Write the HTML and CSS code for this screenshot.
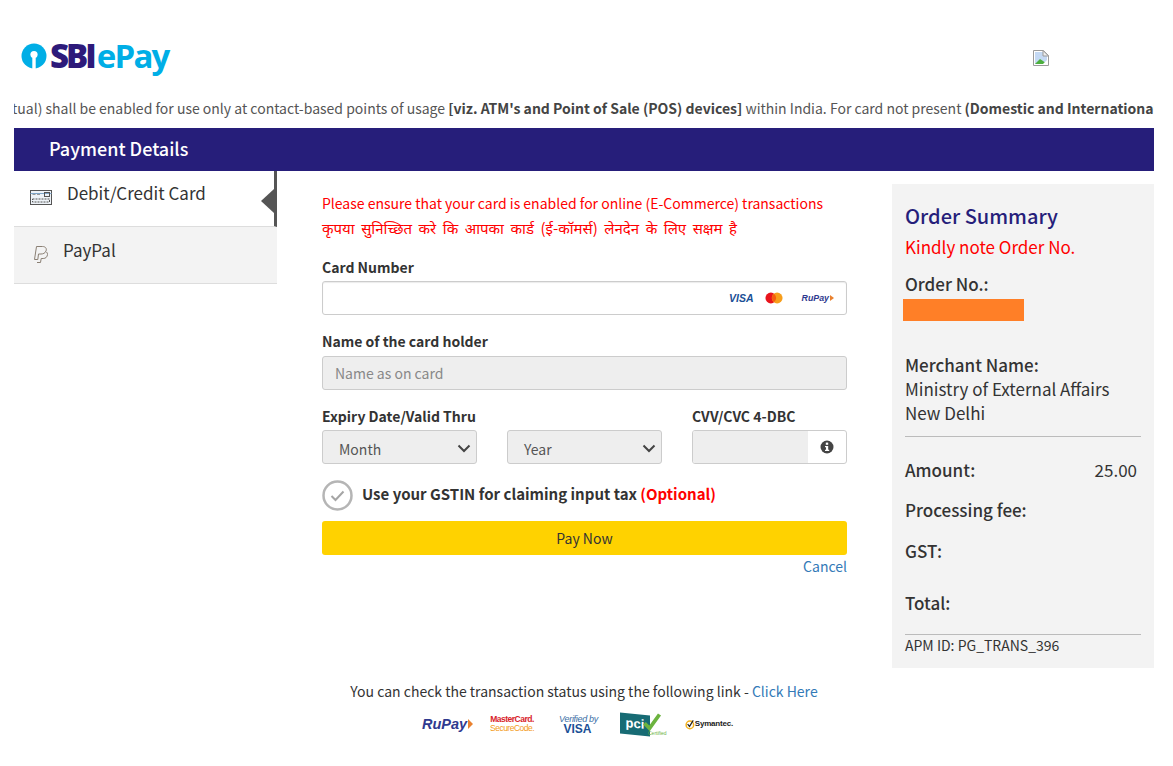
FILE: index.html
```html
<!DOCTYPE html>
<html lang="en">
<head>
<meta charset="utf-8">
<title>SBIePay</title>
<link rel="stylesheet" href="styles.css">
</head>
<body>
<header class="top">
  <div class="logo">
    <svg class="logo-mark" width="26" height="30" viewBox="0 0 26 30"><circle cx="13" cy="14" r="12.500" fill="#00aee6"/><circle cx="13" cy="12.500" r="3.600" fill="#fff"/><rect x="11.300" y="13" width="3.400" height="14" fill="#fff"/></svg>
    <span class="logo-sbi">SBI</span><span class="logo-epay">ePay</span>
  </div>
  <svg class="broken" width="16" height="16" viewBox="0 0 16 16"><path d="M.5.5h10l5 5v10H.5z" fill="#fff" stroke="#9a9a9a"/><path d="M2 2h8v4h4v8H2z" fill="#c4d9f4"/><path d="M2 14l5-5 3 2 4 3z" fill="#4caf3e"/><path d="M10 .5l5.500 5.500h-5.500z" fill="#eee" stroke="#9a9a9a"/><path d="M9 15l6-6v6z" fill="#fff"/></svg>
</header>
<div class="notice"><p>tual) shall be enabled for use only at contact-based points of usage <b>[viz. ATM's and Point of Sale (POS) devices]</b> within India. For card not present <b>(Domestic and International) transactions</b></p></div>
<div class="title-bar">Payment Details</div>
<main class="content">
  <nav class="tabs">
    <div class="tab tab-active">
      <svg class="tab-icon" width="24" height="18" viewBox="0 0 24 18" fill="none" stroke="#555"><rect x="1.500" y="2.500" width="21" height="14" fill="#eef3f8"/><path d="M1.500 5.500h21" stroke="#7fa6c9"/><rect x="15.500" y="4.500" width="5" height="4"/><path d="M3.500 6.500h3M8 6.500h3" stroke="#999"/><rect x="3.500" y="11" width="17" height="3" stroke-dasharray="2 1"/></svg>
      <span>Debit/Credit Card</span>
      <i class="tab-arrow"></i>
    </div>
    <div class="tab tab-paypal">
      <svg class="tab-icon-pp" width="18" height="20" viewBox="0 0 18 20" fill="none" stroke="#8a7f73" stroke-width="1"><path d="M2.500 15.500L4.500 2.500h6c3 0 4.500 2 3.500 4.500-.8 2.200-3 3-5 3H6.500l-.7 5.500z"/><path d="M5 18.500h3.500l.7-4h2c2.500 0 4-1.500 4.300-4 .1-1-.3-1.800-1-2.500"/></svg>
      <span>PayPal</span>
    </div>
  </nav>
  <form class="form">
    <p class="warn">Please ensure that your card is enabled for online (E-Commerce) transactions</p>
    <p class="warn warn-hi" lang="hi">कृपया सुनिच्छित करे कि आपका कार्ड (ई-कॉमर्स) लेनदेन के लिए सक्षम है</p>
    <label class="lbl lbl-card">Card Number</label>
    <div class="input card-input">
      <span class="visa">VISA</span>
      <svg class="mc" width="18" height="12" viewBox="0 0 20 13"><circle cx="6.500" cy="6.500" r="6" fill="#e8141c"/><circle cx="13.500" cy="6.500" r="6" fill="#f79e1b"/><path d="M10 1.700a6 6 0 0 1 0 9.600a6 6 0 0 1 0-9.600z" fill="#f45c10"/></svg>
      <span class="rupay">RuPay<i class="rupay-tick"></i></span>
    </div>
    <label class="lbl lbl-name">Name of the card holder</label>
    <div class="input input-off placeholder">Name as on card</div>
    <div class="row">
      <div class="col col-exp">
        <label class="lbl">Expiry Date/Valid Thru</label>
        <div class="selects">
          <div class="input input-off sel">Month<svg class="chev" width="14" height="9" viewBox="0 0 14 9" fill="none" stroke="#444" stroke-width="2"><path d="M1.500 1.500L7 7l5.500-5.500"/></svg></div>
          <div class="input input-off sel">Year<svg class="chev" width="14" height="9" viewBox="0 0 14 9" fill="none" stroke="#444" stroke-width="2"><path d="M1.500 1.500L7 7l5.500-5.500"/></svg></div>
        </div>
      </div>
      <div class="col col-cvv">
        <label class="lbl">CVV/CVC 4-DBC</label>
        <div class="input cvv"><span class="cvv-fill"></span><span class="cvv-info"><svg width="14" height="14" viewBox="0 0 14 14"><circle cx="7" cy="7" r="6.500" fill="#444"/><rect x="5.800" y="2.600" width="2.400" height="2.200" fill="#fff"/><path d="M5 6h3.200v3.800H9.200v1.200H5V9.800h1V7.200H5z" fill="#fff"/></svg></span></div>
      </div>
    </div>
    <div class="gst">
      <svg width="31" height="31" viewBox="0 0 31 31" fill="none"><circle cx="15.500" cy="15.500" r="14" stroke="#b5b5b5" stroke-width="2.500"/><path d="M9.500 16l4 4 8-8.500" stroke="#a5a5a5" stroke-width="2"/></svg>
      <span class="gst-text">Use your GSTIN for claiming input tax <b class="opt">(Optional)</b></span>
    </div>
    <button type="button" class="pay">Pay Now</button>
    <a class="cancel">Cancel</a>
  </form>
  <aside class="summary">
    <h2 class="sum-title">Order Summary</h2>
    <p class="sum-note">Kindly note Order No.</p>
    <p class="sum-key sum-order">Order No.:</p>
    <div class="redact"></div>
    <p class="sum-key sum-merchant">Merchant Name:</p>
    <p class="sum-val">Ministry of External Affairs</p>
    <p class="sum-val">New Delhi</p>
    <hr class="rule">
    <div class="line line-amount"><span>Amount:</span><span class="amount">25.00</span></div>
    <div class="line">Processing fee:</div>
    <div class="line line-gst">GST:</div>
    <div class="line line-total">Total:</div>
    <hr class="rule rule-apm">
    <p class="apm">APM ID: PG_TRANS_396</p>
  </aside>
</main>
<footer class="foot">
  <p class="foot-text">You can check the transaction status using the following link - <a class="link">Click Here</a></p>
  <div class="badges">
    <span class="b-rupay">RuPay<i class="b-tick"></i></span>
    <span class="b-mc"><b>MasterCard.</b><b class="b-mc2">SecureCode.</b></span>
    <span class="b-vbv">Verified by<b>VISA</b></span>
    <span class="b-pci"><span class="pci-box">pci</span><svg class="pci-check" width="20" height="20" viewBox="0 0 16 16" fill="none" stroke="#6cb33f" stroke-width="3"><path d="M2 9l4 4 8-11"/></svg><span class="pci-cert">Certified</span></span>
    <span class="b-sym"><svg width="12" height="13" viewBox="0 0 13 13" fill="none"><circle cx="6.500" cy="7" r="5" stroke="#f5b21b" stroke-width="2"/><path d="M3.500 6l2.500 3 5-8" stroke="#222" stroke-width="1.600"/></svg>Symantec.</span>
  </div>
</footer>
</body>
</html>
```
FILE: styles.css
```css
* { box-sizing: border-box; }
html, body { margin: 0; padding: 0; }
body { width: 1173px; height: 766px; overflow: hidden; background: #fff; color: #333; font-family: "Noto Sans CJK SC", "Noto Sans", sans-serif; font-size: 16px; line-height: 24px; padding: 0 19px 0 14px; }
p { margin: 0; }

.top { height: 89px; display: flex; align-items: flex-start; }
.logo { margin: 39px 0 0 7px; display: flex; align-items: center; height: 34px; font-family: "Open Sans", sans-serif; font-size: 33px; font-weight: 800; line-height: 34px; }
.logo-mark { margin-right: 3px; margin-top: 2px; flex: none; }
.logo-sbi { color: #2d1a7a; letter-spacing: -3px; }
.logo-epay { color: #00aee6; margin-left: 3px; font-weight: 700; letter-spacing: -1.800px; }
.broken { margin: 50px 105px 0 auto; }

.notice { height: 39px; overflow: hidden; color: #555; font-size: 14px; line-height: 39px; white-space: nowrap; }
.notice p { margin-left: -2px; }
.notice b { color: #444; }
.title-bar { height: 43px; background: #261e7a; color: #fff; font-size: 18px; font-weight: 500; line-height: 41px; padding-left: 35px; }

.content { display: flex; align-items: flex-start; }
.tabs { width: 263px; flex: none; }
.tab { display: flex; align-items: center; font-size: 17px; }
.tab-active { height: 56px; padding: 0 0 12px 15px; position: relative; border-right: 3px solid #555; border-bottom: 1px solid #ddd; }
.tab-icon { margin-right: 14px; margin-top: 9px; }
.tab-arrow { position: absolute; right: 0; top: 18px; border: 8px solid transparent; border-left: 0; border-right: 13px solid #555; border-top-width: 12px; border-bottom-width: 12px; }
.tab-paypal { height: 57px; background: #f3f3f3; border-bottom: 1px solid #ddd; padding: 0 0 10px 18px; }
.tab-icon-pp { margin-right: 13px; margin-top: 8px; }

.form { width: 525px; flex: none; margin-left: 45px; padding-top: 20px; }
.warn { color: #f00; font-size: 14px; line-height: 24px; white-space: nowrap; }
.warn-hi { height: 25px; margin-top: 1px; font-size: 15px; word-spacing: 3.200px; }
.lbl { display: block; font-weight: 600; font-size: 14px; line-height: 24px; margin-bottom: 2px; color: #333; }
.lbl-card { margin-top: 14px; }
.lbl-name { margin-bottom: 3px; }
.input { height: 34px; border: 1px solid #ccc; border-radius: 3px; margin-bottom: 14px; }
.input-off { background: #eee; }
.card-input { display: flex; align-items: center; padding-right: 12px; box-shadow: inset 0 1px 1px rgba(0,0,0,.08); }
.visa { margin-left: auto; color: #1a4f96; font: italic 900 10.500px "Liberation Sans", sans-serif; margin-right: 11px; }
.rupay { display: inline-flex; align-items: center; margin-left: 19px; color: #2f3a8f; font: italic 700 8.800px "Liberation Sans", sans-serif; }
.rupay-tick { display: inline-block; border-left: 4px solid #e9812f; border-top: 3px solid transparent; border-bottom: 3px solid transparent; margin-left: 1px; }
.placeholder { color: #888; font-size: 14px; line-height: 33px; padding-left: 12px; }

.row { display: flex; justify-content: space-between; }
.col-exp { width: 340px; }
.col-cvv { width: 155px; }
.selects { display: flex; justify-content: space-between; }
.sel { width: 155px; display: flex; align-items: center; justify-content: space-between; font-size: 14px; color: #555; padding: 4px 5px 0 16px; margin-bottom: 0; }
.chev { margin-top: -2px; }
.cvv { display: flex; overflow: hidden; margin-bottom: 0; }
.cvv-fill { width: 115px; background: #eee; }
.cvv-info { flex: 1; display: flex; align-items: center; justify-content: center; }

.gst { display: flex; align-items: center; height: 31px; margin-top: 16px; gap: 9px; }
.gst-text { font-size: 15px; font-weight: 600; color: #333; margin-bottom: 3px; }
.opt { color: #f00; font-weight: 600; }
.pay { display: block; width: 100%; height: 34px; margin-top: 10px; border: 0; border-radius: 3px; background: #ffd200; color: #333; font: inherit; font-size: 14px; }
.cancel { display: block; text-align: right; color: #337ab7; font-size: 14px; line-height: 20px; margin-top: 1px; }

.summary { width: 262px; height: 484px; flex: none; margin: 13px 0 0 45px; background: #f3f3f3; padding: 19px 13px 0; font-size: 17px; }
.sum-title { margin: 0; font-size: 20px; font-weight: 500; color: #261e7a; line-height: 26px; }
.sum-note { color: #f00; line-height: 24px; margin-top: 6px; }
.sum-key { font-weight: 500; }
.sum-order { margin-top: 13px; }
.redact { width: 121px; height: 22px; background: #ff7f27; margin: 3px 0 0 -2px; }
.sum-merchant { margin-top: 32px; }
.sum-val { line-height: 24px; }
.rule { border: 0; border-top: 1px solid #bbb; margin: 11px 0 0; }
.line { font-weight: 500; line-height: 24px; margin-top: 16px; height: 24px; }
.line-amount { display: flex; justify-content: space-between; margin-top: 21px; padding-right: 4px; }
.amount { font-weight: 400; }
.line-gst { margin-top: 17px; }
.line-total { margin-top: 28px; }
.rule-apm { margin-top: 19px; }
.apm { font-size: 14px; line-height: 20px; }

.foot { text-align: center; margin-top: 11px; width: 1140px; }
.foot-text { font-size: 14px; color: #333; }
.link { color: #337ab7; }
.badges { display: flex; justify-content: center; align-items: center; height: 34px; margin-top: 4px; padding-right: 13px; font-family: "Liberation Sans", sans-serif; }
.b-rupay { width: 48px; color: #2f3a8f; font-style: italic; font-weight: 700; font-size: 14.500px; display: inline-flex; align-items: center; flex: none; }
.b-tick { display: inline-block; border-left: 5px solid #e9812f; border-top: 5px solid transparent; border-bottom: 5px solid transparent; margin-left: 1px; }
.b-mc { width: 44px; margin-left: 20px; display: inline-flex; flex-direction: column; font-size: 8.500px; line-height: 9px; color: #d8232a; letter-spacing: -.5px; flex: none; white-space: nowrap; }
.b-mc2 { color: #f39a20; font-weight: 400; }
.b-vbv { width: 41px; margin-left: 23px; display: inline-flex; flex-direction: column; align-items: flex-end; font-size: 9px; line-height: 10px; font-style: italic; color: #3a6ea5; letter-spacing: -.3px; flex: none; white-space: nowrap; }
.b-vbv b { align-self: center; color: #1a4f96; font-size: 12px; line-height: 11px; font-style: normal; letter-spacing: 0; }
.b-pci { margin-left: 22px; display: inline-flex; align-items: center; position: relative; width: 46px; height: 23px; flex: none; }
.pci-box { display: block; width: 30px; height: 21px; background: #176b74; color: #fff; font-weight: 700; font-size: 13px; line-height: 20px; text-align: center; transform: skewY(6deg); }
.pci-check { position: absolute; left: 22px; top: -1px; }
.pci-cert { position: absolute; left: 28px; bottom: -1px; font-size: 5px; line-height: 7px; color: #6cb33f; }
.b-sym { width: 48px; margin-left: 19px; display: inline-flex; align-items: center; font-size: 8px; color: #222; font-weight: 700; letter-spacing: -.2px; flex: none; }
```
